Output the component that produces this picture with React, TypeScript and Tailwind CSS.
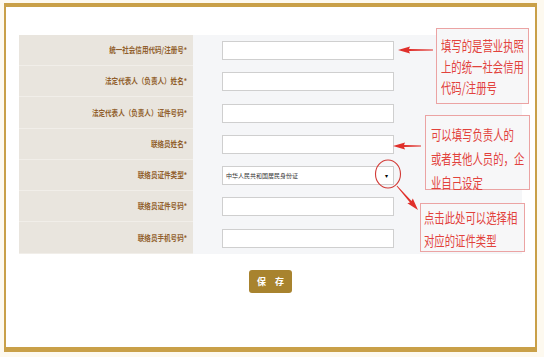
import React from "react";

const rows = [
  { label: "统一社会信用代码/注册号*" },
  { label: "法定代表人（负责人）姓名*" },
  { label: "法定代表人（负责人）证件号码*" },
  { label: "联络员姓名*" },
  { label: "联络员证件类型*", select: "中华人民共和国居民身份证" },
  { label: "联络员证件号码*" },
  { label: "联络员手机号码*" },
];

const heights = ["h-[31px]", "h-[31px]", "h-[32px]", "h-[31px]", "h-[31px]", "h-[31px]", "h-[32px]"];

function Arrow({ x, y, angle, len }: { x: number; y: number; angle: number; len: number }) {
  return (
    <g transform={`translate(${x} ${y}) rotate(${angle})`}>
      <polygon
        points={`0,0 12,-3.6 11,-1 ${len},-0.4 ${len},0.4 11,1 12,3.6`}
        fill="#e0302b"
      />
    </g>
  );
}

function Note({ className, lines, lh }: { className: string; lines: string[]; lh: string }) {
  return (
    <div className={`absolute border border-[#eba3a3] bg-[#f7f7f8] ${className}`}>
      {lines.map((l, i) => (
        <div key={i} className={`${lh} text-[14px] text-[#e2423c] whitespace-nowrap origin-left scale-x-[0.74]`}>
          {l}
        </div>
      ))}
    </div>
  );
}

export default function App() {
  return (
    <div
      className="relative w-[544px] h-[357px] overflow-hidden bg-[#fdf9ef] pt-[3px] pl-[4px]"
      style={{ fontFamily: '"Noto Sans CJK SC", "Noto Sans", sans-serif' }}
    >
      <div className="w-[533px] h-[349px] bg-white border-t-[4px] border-x-2 border-b-[5px] border-[#c9a048] pt-[28px]">
        {/* form table */}
        <div className="ml-[13px] w-[503px] flex flex-col">
          {rows.map((r, i) => (
            <div key={i} className={`flex ${heights[i]}`}>
              <div className="w-[174px] shrink-0 bg-[#e9e5de] border-b border-[#f1eee9] flex items-center justify-end pr-[6px]">
                <span className="text-[8px] font-bold text-[#915f2c] whitespace-nowrap origin-right scale-x-[0.82] inline-block">
                  {r.label}
                </span>
              </div>
              <div className="flex-1 bg-[#f5f6f8] flex items-center pl-[29px]">
                {r.select ? (
                  <div className="w-[172px] h-[19px] border border-[#cfcfcf] bg-white flex items-center justify-between pl-[3px] pr-[5px]">
                    <span className="text-[6px] text-[#333] whitespace-nowrap">{r.select}</span>
                    <span className="text-[6px] text-black leading-none">▾</span>
                  </div>
                ) : (
                  <div className="w-[172px] h-[19px] border border-[#cfcfcf] bg-white" />
                )}
              </div>
            </div>
          ))}
        </div>

        {/* save button */}
        <div className="flex justify-center mt-[16px]">
          <button className="w-[43px] h-[23px] rounded-[3px] bg-[#a8832e] text-white text-[9px] font-bold flex items-center justify-center gap-[9px]">
            <span>保</span>
            <span>存</span>
          </button>
        </div>
      </div>

      {/* annotations */}
      <Note
        className="left-[436px] top-[28px] w-[93px] h-[76px] pl-[4px] pt-[6px]"
        lh="leading-[21px]"
        lines={["填写的是营业执照", "上的统一社会信用", "代码/注册号"]}
      />
      <Note
        className="left-[425px] top-[115px] w-[105px] h-[75px] pl-[5px] pt-[6px]"
        lh="leading-[24px]"
        lines={["可以填写负责人的", "或者其他人员的，企", "业自己设定"]}
      />
      <Note
        className="left-[420px] top-[203px] w-[105px] h-[49px] pl-[3px] pt-[2px]"
        lh="leading-[23px]"
        lines={["点击此处可以选择相", "对应的证件类型"]}
      />

      <svg className="absolute inset-0 pointer-events-none" width="544" height="357" viewBox="0 0 544 357">
        <Arrow x={398} y={50} angle={0} len={35} />
        <Arrow x={393} y={146} angle={0} len={28} />
        <ellipse cx="388" cy="174" rx="12.5" ry="14" fill="none" stroke="#d23a36" strokeWidth="1.1" />
        <Arrow x={418} y={210} angle={228.8} len={32} />
      </svg>
    </div>
  );
}
